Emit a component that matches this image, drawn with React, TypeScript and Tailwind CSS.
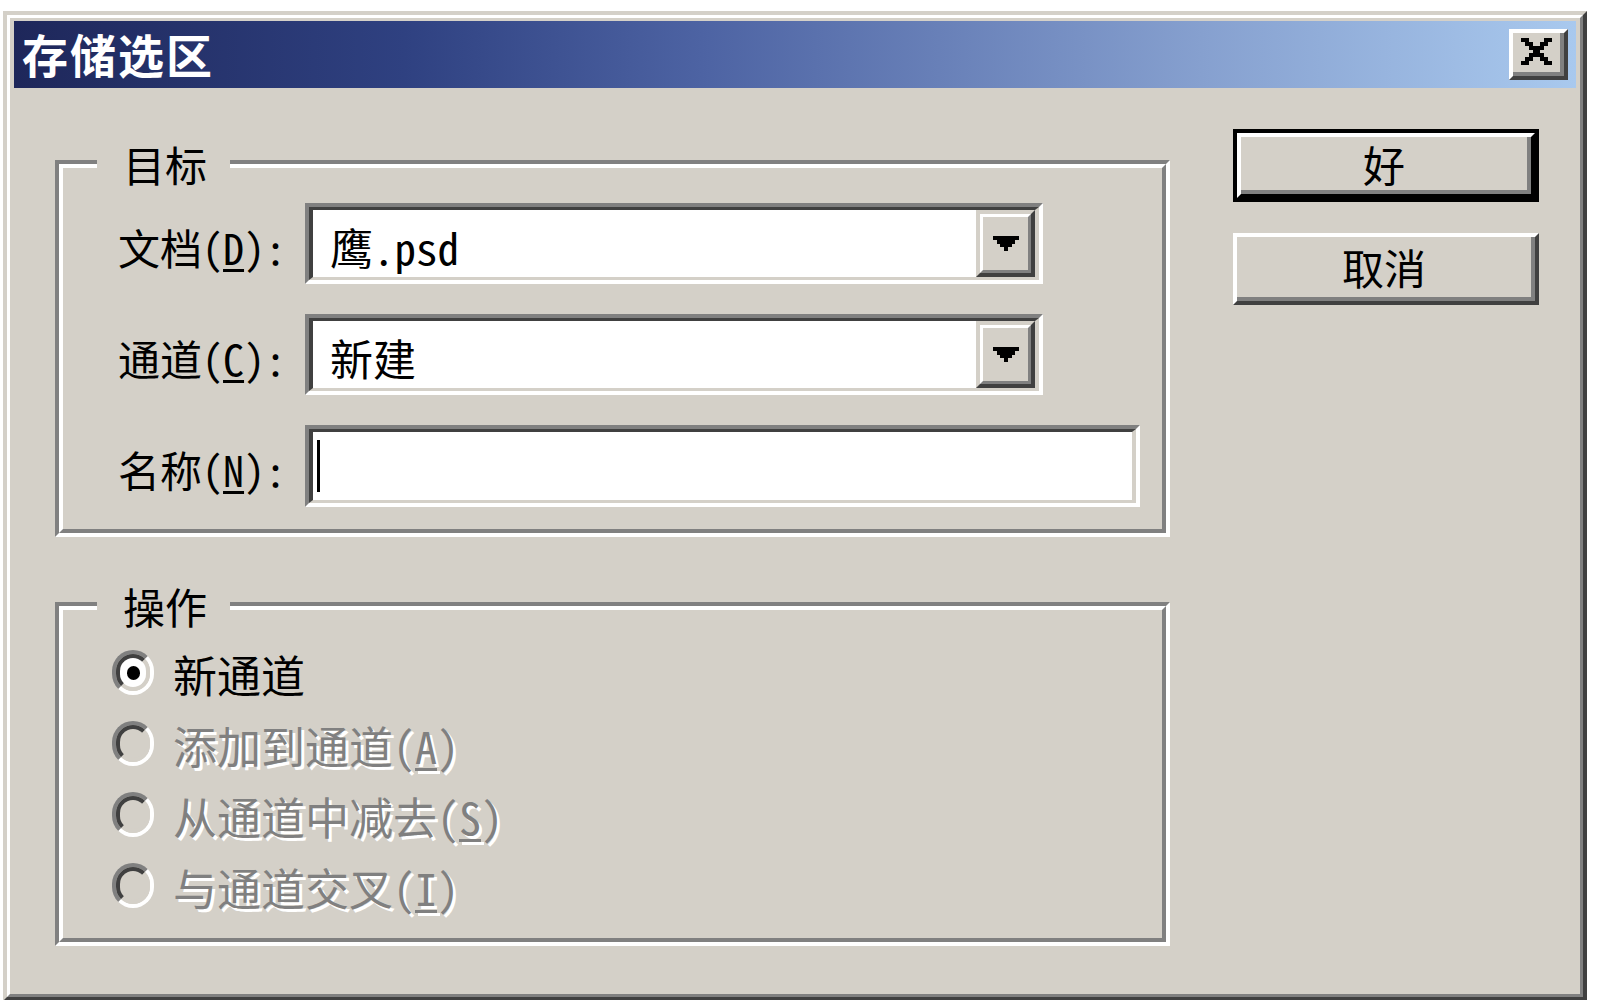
import React from "react";

const FONT = "font-['Noto_Sans_Mono_CJK_SC','Noto_Sans_CJK_SC',sans-serif]";

const CLOSE_ROWS = ["11000011", "01100110", "00111100", "00011000", "00111100", "01100110", "11000011"];

function CloseGlyph() {
  return (
    <svg width="31" height="27" viewBox="0 0 8 7" shapeRendering="crispEdges">
      {CLOSE_ROWS.map((row, y) =>
        row.split("").map((c, x) => (c === "1" ? <rect key={`${x}-${y}`} x={x} y={y} width="1" height="1" fill="#000" /> : null))
      )}
    </svg>
  );
}

function DropArrow() {
  return (
    <svg width="26" height="15" viewBox="0 0 7 4" shapeRendering="crispEdges">
      <path d="M0 0h7v1h-1v1h-1v1h-1v1h-1v-1h-1v-1h-1v-1h-1z" fill="#000" />
    </svg>
  );
}

function GroupBox({ title, className, children }: { title: string; className: string; children: React.ReactNode }) {
  return (
    <div className={`relative border-4 border-t-[#808080] border-l-[#808080] border-r-white border-b-white ${className}`}>
      <div className="h-full border-4 border-t-white border-l-white border-r-[#808080] border-b-[#808080]">{children}</div>
      <span className="absolute left-[38px] top-0 w-[133px] -translate-y-1/2 bg-[#d4d0c8] pl-[26px] text-[42px] leading-none text-black">
        {title}
      </span>
    </div>
  );
}

function Sunken({ className, children }: { className: string; children: React.ReactNode }) {
  return (
    <div className={`border-4 border-t-[#808080] border-l-[#808080] border-r-white border-b-white ${className}`}>
      <div className="flex h-full border-x-4 border-y-[3px] border-t-[#404040] border-l-[#404040] border-r-[#d4d0c8] border-b-[#d4d0c8] bg-white">
        {children}
      </div>
    </div>
  );
}

function Combo({ value }: { value: string }) {
  return (
    <Sunken className="h-[81px] w-[738px]">
      <div className="flex flex-1 items-center pl-[17px]">
        <span className="mt-[6px] text-[43px] leading-none text-black">{value}</span>
      </div>
      <div className="h-full w-[59px] border-4 border-t-[#d4d0c8] border-l-[#d4d0c8] border-r-[#404040] border-b-[#404040]">
        <div className="flex h-full items-center justify-center border-[3px] border-t-white border-l-white border-r-[#808080] border-b-[#808080] bg-[#d4d0c8]">
          <DropArrow />
        </div>
      </div>
    </Sunken>
  );
}

function Label({ text, mnemonic }: { text: string; mnemonic: string }) {
  return (
    <span className="mt-[6px] w-[187px] text-[42px] leading-none text-black">
      {text}(<span className="underline decoration-[3px] underline-offset-[4px]">{mnemonic}</span>):
    </span>
  );
}

function Radio({ checked, disabled }: { checked?: boolean; disabled?: boolean }) {
  return (
    <div className="h-[45px] w-[42px] shrink-0 rounded-full border-4 border-t-[#808080] border-l-[#808080] border-r-white border-b-white">
      <div
        className={`flex h-full w-full items-center justify-center rounded-full border-4 border-t-[#404040] border-l-[#404040] border-r-[#d4d0c8] border-b-[#d4d0c8] ${
          disabled ? "bg-[#d4d0c8]" : "bg-white"
        }`}
      >
        {checked && <div className="h-[14px] w-[13px] rounded-full bg-black" />}
      </div>
    </div>
  );
}

const OPTIONS = [
  { label: "新通道", key: "", checked: true, disabled: false },
  { label: "添加到通道", key: "A", checked: false, disabled: true },
  { label: "从通道中减去", key: "S", checked: false, disabled: true },
  { label: "与通道交叉", key: "I", checked: false, disabled: true },
];

export default function App() {
  return (
    <div className={`h-[1000px] w-[1615px] overflow-hidden bg-white pl-[3px] pt-[11px] ${FONT}`}>
      <div className="h-[990px] w-[1584px] border-4 border-t-[#d4d0c8] border-l-[#d4d0c8] border-r-[#404040] border-b-[#404040] bg-[#d4d0c8]">
        <div className="h-full border-[3px] border-t-white border-l-white border-r-[#808080] border-b-[#808080] px-[4px] pt-[3px]">
          {/* Title bar */}
          <div className="flex h-[67px] items-center justify-between bg-[linear-gradient(90deg,#1e275a_0%,#2f4181_25%,#4d63a3_44%,#86a0cf_76%,#a9c9ee_100%)] pl-[8px] pr-[8px]">
            <span className="mb-[3px] text-[46px] font-bold leading-none tracking-[2px] text-white">存储选区</span>
            <div className="h-[51px] w-[59px] border-4 border-t-white border-l-white border-r-[#404040] border-b-[#404040]">
              <div className="flex h-full items-center justify-center border-r-4 border-b-4 border-r-[#808080] border-b-[#808080] bg-[#d4d0c8] pb-[2px]">
                <CloseGlyph />
              </div>
            </div>
          </div>

          {/* Body */}
          <div className="flex">
            <div className="ml-[41px] flex w-[1115px] flex-col pt-[72px]">
              <GroupBox title="目标" className="h-[377px]">
                <div className="flex flex-col gap-[30px] pl-[55px] pt-[35px]">
                  <div className="flex items-center">
                    <Label text="文档" mnemonic="D" />
                    <Combo value="鹰.psd" />
                  </div>
                  <div className="flex items-center">
                    <Label text="通道" mnemonic="C" />
                    <Combo value="新建" />
                  </div>
                  <div className="flex items-center">
                    <Label text="名称" mnemonic="N" />
                    <Sunken className="h-[82px] w-[835px]">
                      <div className="ml-[4px] mt-[8px] h-[52px] w-[3px] bg-black" />
                    </Sunken>
                  </div>
                </div>
              </GroupBox>

              <GroupBox title="操作" className="mt-[65px] h-[344px]">
                <div className="flex flex-col pl-[49px] pt-[27px]">
                  {OPTIONS.map((o) => (
                    <div key={o.label} className="flex h-[71px] items-center gap-[19px]">
                      <Radio checked={o.checked} disabled={o.disabled} />
                      <span
                        className={`mt-[2px] text-[44px] leading-none ${
                          o.disabled ? "text-[#808080] [text-shadow:3px_3px_0_#fff]" : "text-black"
                        }`}
                      >
                        {o.label}
                        {o.key && (
                          <>
                            (<span className="underline decoration-[3px] underline-offset-[4px]">{o.key}</span>)
                          </>
                        )}
                      </span>
                    </div>
                  ))}
                </div>
              </GroupBox>
            </div>

            {/* Buttons */}
            <div className="ml-[63px] flex w-[306px] flex-col gap-[31px] pt-[41px]">
              <div className="h-[73px] border-4 border-black">
                <div className="h-full border-4 border-t-white border-l-white border-r-black border-b-black">
                  <div className="flex h-full items-center justify-center border-r-4 border-b-4 border-r-[#808080] border-b-[#808080] text-[42px] leading-none text-black">
                    好
                  </div>
                </div>
              </div>
              <div className="h-[72px] border-4 border-t-white border-l-white border-r-[#404040] border-b-[#404040]">
                <div className="flex h-full items-center justify-center border-r-4 border-b-4 border-r-[#808080] border-b-[#808080] text-[42px] leading-none text-black">
                  取消
                </div>
              </div>
            </div>
          </div>
        </div>
      </div>
    </div>
  );
}
